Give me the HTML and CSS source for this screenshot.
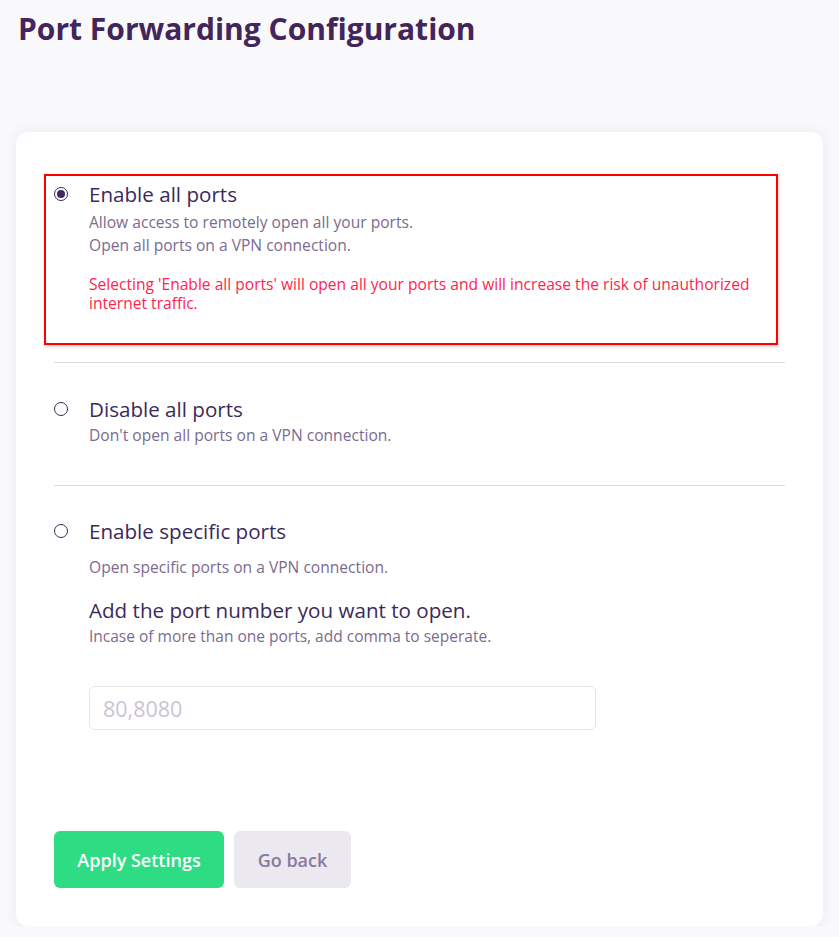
FILE: index.html
```html
<!DOCTYPE html>
<html lang="en">
<head>
<meta charset="utf-8">
<title>Port Forwarding Configuration</title>
<link rel="stylesheet" href="styles.css">
</head>
<body>
<h1 class="page-title">Port Forwarding Configuration</h1>
<div class="card">
  <div class="option option-highlight">
    <span class="radio radio-checked"></span>
    <div class="option-body">
      <div class="option-title">Enable all ports</div>
      <div class="option-desc first">Allow access to remotely open all your ports.</div>
      <div class="option-desc">Open all ports on a VPN connection.</div>
      <div class="option-warn">Selecting 'Enable all ports' will open all your ports and will increase the risk of unauthorized internet traffic.</div>
    </div>
  </div>
  <hr class="sep sep-first">
  <div class="option">
    <span class="radio"></span>
    <div class="option-body">
      <div class="option-title">Disable all ports</div>
      <div class="option-desc first">Don't open all ports on a VPN connection.</div>
    </div>
  </div>
  <hr class="sep sep-second">
  <div class="option">
    <span class="radio"></span>
    <div class="option-body">
      <div class="option-title">Enable specific ports</div>
      <div class="option-desc spaced">Open specific ports on a VPN connection.</div>
      <div class="sub-title">Add the port number you want to open.</div>
      <div class="sub-desc">Incase of more than one ports, add comma to seperate.</div>
      <input class="port-input" type="text" placeholder="80,8080">
    </div>
  </div>
  <div class="actions">
    <button class="btn btn-primary">Apply Settings</button>
    <button class="btn btn-secondary">Go back</button>
  </div>
</div>
</body>
</html>
```
FILE: styles.css
```css
* { box-sizing: border-box; }
html, body { margin: 0; padding: 0; }
body {
  background: #f9f8fb;
  font-family: "Open Sans", "Noto Sans", sans-serif;
  color: #3b2a5a;
}
.page-title {
  margin: 0;
  padding: 7px 18px 0;
  font-size: 30px;
  line-height: 44px;
  font-weight: 700;
  color: #42255a;
}
.card {
  margin: 81px 16px 0;
  padding: 42px 38px 38px;
  background: #fff;
  border-radius: 12px;
  box-shadow: 0 0 14px rgba(60, 40, 90, 0.07);
}
.option {
  display: flex;
  align-items: flex-start;
}
.option-highlight {
  margin-left: -10px;
  width: 734px;
  border: 2px solid #ff0000;
  padding: 5px 0 30px 8px;
  box-shadow: 1px 2px 3px rgba(0,0,0,0.18);
}
.radio {
  flex: none;
  width: 14px;
  height: 14px;
  margin-top: 6px;
  margin-right: 21px;
  border: 1px solid #3b2a55;
  border-radius: 50%;
  display: flex;
  align-items: center;
  justify-content: center;
}
.radio-checked::after {
  content: "";
  width: 8px;
  height: 8px;
  border-radius: 50%;
  background: #45275f;
}
.option-body { flex: 1; }
.option-title {
  font-size: 20.6px;
  line-height: 26px;
  color: #3b2a5a;
}
.option-desc {
  font-size: 15.6px;
  line-height: 23px;
  color: #7b6b90;
}
.option-desc.first { margin-top: 4px; }
.sep + .option .option-desc.first { margin-top: 2px; }
.option-desc.spaced { margin-top: 12px; }
.option-warn {
  margin-top: 18px;
  padding-right: 20px;
  font-size: 15.6px;
  line-height: 19px;
  color: #ff1f4f;
}
.sep {
  border: 0;
  border-top: 1px solid #dcdbe0;
  margin: 0;
}
.sep-first { margin: 17px 0 33px; }
.sep-second { margin: 38px 0 32px; }
.sub-title {
  margin-top: 18px;
  font-size: 20.6px;
  line-height: 26px;
  color: #3b2a5a;
}
.sub-desc {
  margin-top: 3px;
  font-size: 15.5px;
  line-height: 20px;
  color: #7b6b90;
}
.port-input {
  display: block;
  margin-top: 40px;
  width: 507px;
  height: 44px;
  border: 1px solid #e6e3ea;
  border-radius: 6px;
  padding: 0 13px;
  font-family: inherit;
  font-size: 21.5px;
  color: #3b2a5a;
  outline: none;
}
.port-input::placeholder { color: #cbc3d3; }
.actions {
  display: flex;
  gap: 10px;
  margin-top: 101px;
}
.btn {
  height: 57px;
  border: 0;
  border-radius: 6px;
  font-family: inherit;
  font-size: 18px;
  font-weight: 600;
  cursor: pointer;
}
.btn-primary {
  width: 170px;
  background: #2edc84;
  color: #fff;
}
.btn-secondary {
  width: 117px;
  background: #ebe8ef;
  color: #8a7a9e;
}
```
